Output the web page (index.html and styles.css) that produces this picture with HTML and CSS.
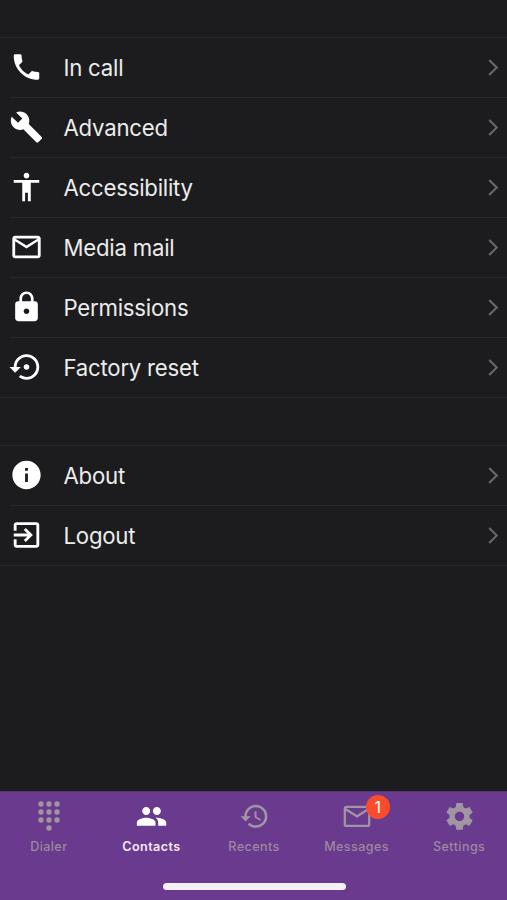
FILE: index.html
```html
<!DOCTYPE html>
<html lang="en">
<head>
<meta charset="utf-8">
<title>Settings</title>
<link rel="stylesheet" href="styles.css">
</head>
<body>
<main class="settings">
  <ul class="group">
    <li class="row"><svg class="icon" viewBox="0 0 24 24"><path d="M6.620 10.790c1.440 2.830 3.760 5.140 6.590 6.590l2.200-2.200c.27-.27.67-.36 1.020-.24 1.120.37 2.330.57 3.570.57.55 0 1 .45 1 1V20c0 .55-.45 1-1 1-9.390 0-17-7.610-17-17 0-.55.45-1 1-1h3.500c.55 0 1 .45 1 1 0 1.250.2 2.450.57 3.570.11.35.03.74-.25 1.020l-2.200 2.200z"/></svg><span class="label">In call</span><svg class="chevron" viewBox="0 0 12 20"><path d="M2 2l8 8-8 8"/></svg></li>
    <li class="row"><svg class="icon" viewBox="0 0 24 24"><path d="M22.700 19l-9.100-9.100c.9-2.300.4-5-1.500-6.900-2-2-5-2.400-7.400-1.300L9 6 6 9 1.600 4.700C.4 7.100.9 10.100 2.900 12.100c1.900 1.900 4.600 2.400 6.900 1.500l9.100 9.100c.4.4 1 .4 1.400 0l2.300-2.300c.5-.4.5-1.100.1-1.400z"/></svg><span class="label">Advanced</span><svg class="chevron" viewBox="0 0 12 20"><path d="M2 2l8 8-8 8"/></svg></li>
    <li class="row"><svg class="icon" viewBox="0 0 24 24"><path d="M12 2c1.100 0 2 .9 2 2s-.9 2-2 2-2-.9-2-2 .9-2 2-2zm9 7h-6v13h-2v-6h-2v6H9V9H3V7h18v2z"/></svg><span class="label">Accessibility</span><svg class="chevron" viewBox="0 0 12 20"><path d="M2 2l8 8-8 8"/></svg></li>
    <li class="row"><svg class="icon" viewBox="0 0 24 24"><path d="M20 4H4c-1.100 0-1.990.9-1.990 2L2 18c0 1.100.9 2 2 2h16c1.100 0 2-.9 2-2V6c0-1.100-.9-2-2-2zm0 14H4V8l8 5 8-5v10zm-8-7L4 6h16l-8 5z"/></svg><span class="label">Media mail</span><svg class="chevron" viewBox="0 0 12 20"><path d="M2 2l8 8-8 8"/></svg></li>
    <li class="row"><svg class="icon" viewBox="0 0 24 24"><path d="M18 8h-1V6c0-2.760-2.240-5-5-5S7 3.240 7 6v2H6c-1.100 0-2 .9-2 2v10c0 1.100.9 2 2 2h12c1.100 0 2-.9 2-2V10c0-1.100-.9-2-2-2zm-6 9c-1.100 0-2-.9-2-2s.9-2 2-2 2 .9 2 2-.9 2-2 2zm3.100-9H8.900V6c0-1.710 1.390-3.100 3.100-3.100s3.100 1.390 3.100 3.100v2z"/></svg><span class="label">Permissions</span><svg class="chevron" viewBox="0 0 12 20"><path d="M2 2l8 8-8 8"/></svg></li>
    <li class="row"><svg class="icon" viewBox="0 0 24 24"><path d="M14 12c0-1.100-.9-2-2-2s-2 .9-2 2 .9 2 2 2 2-.9 2-2zm-2-9c-4.970 0-9 4.030-9 9H0l4 4 4-4H5c0-3.870 3.130-7 7-7s7 3.130 7 7-3.130 7-7 7c-1.510 0-2.910-.49-4.060-1.300l-1.420 1.440C8.040 20.300 9.940 21 12 21c4.970 0 9-4.030 9-9s-4.030-9-9-9z"/></svg><span class="label">Factory reset</span><svg class="chevron" viewBox="0 0 12 20"><path d="M2 2l8 8-8 8"/></svg></li>
  </ul>
  <ul class="group">
    <li class="row"><svg class="icon" viewBox="0 0 24 24"><path d="M12 2C6.480 2 2 6.480 2 12s4.480 10 10 10 10-4.480 10-10S17.520 2 12 2zm1 15h-2v-6h2v6zm0-8h-2V7h2v2z"/></svg><span class="label">About</span><svg class="chevron" viewBox="0 0 12 20"><path d="M2 2l8 8-8 8"/></svg></li>
    <li class="row"><svg class="icon" viewBox="0 0 24 24"><path d="M10.090 15.590L11.500 17l5-5-5-5-1.410 1.410L12.670 11H3v2h9.670l-2.580 2.590zM19 3H5c-1.110 0-2 .9-2 2v4h2V5h14v14H5v-4H3v4c0 1.100.89 2 2 2h14c1.100 0 2-.9 2-2V5c0-1.100-.9-2-2-2z"/></svg><span class="label">Logout</span><svg class="chevron" viewBox="0 0 12 20"><path d="M2 2l8 8-8 8"/></svg></li>
  </ul>
</main>
<nav class="tabbar">
  <div class="tabs">
    <div class="tab"><svg class="tab-icon" viewBox="0 0 24 24"><circle cx="6" cy="3" r="2"/><circle cx="12" cy="3" r="2"/><circle cx="18" cy="3" r="2"/><circle cx="6" cy="9" r="2"/><circle cx="12" cy="9" r="2"/><circle cx="18" cy="9" r="2"/><circle cx="6" cy="15" r="2"/><circle cx="12" cy="15" r="2"/><circle cx="18" cy="15" r="2"/><circle cx="12" cy="21" r="2"/></svg><span>Dialer</span></div>
    <div class="tab active"><svg class="tab-icon" viewBox="-.4 -.3 24 24"><path d="M16 11c1.660 0 2.990-1.340 2.990-3S17.660 5 16 5c-1.660 0-3 1.340-3 3s1.340 3 3 3zm-8 0c1.660 0 2.990-1.340 2.990-3S9.660 5 8 5C6.340 5 5 6.340 5 8s1.340 3 3 3zm0 2c-2.330 0-7 1.170-7 3.500V19h14v-2.500c0-2.330-4.670-3.500-7-3.500zm8 0c-.29 0-.62.02-.97.05 1.160.84 1.970 1.970 1.970 3.450V19h6v-2.500c0-2.330-4.670-3.500-7-3.500z"/></svg><span>Contacts</span></div>
    <div class="tab"><svg class="tab-icon" viewBox="-.9 -.7 24.900 24.900"><path d="M13 3c-4.970 0-9 4.030-9 9H1l3.890 3.890.07.14L9 12H6c0-3.870 3.130-7 7-7s7 3.130 7 7-3.130 7-7 7c-1.930 0-3.680-.79-4.940-2.060l-1.420 1.420C8.270 19.990 10.510 21 13 21c4.970 0 9-4.030 9-9s-4.030-9-9-9zm-1 5v5l4.280 2.540.72-1.210-3.500-2.080V8H12z"/></svg><span>Recents</span></div>
    <div class="tab"><svg class="tab-icon" viewBox="0 -.3 24 24"><path d="M20 4H4c-1.100 0-1.990.9-1.990 2L2 18c0 1.100.9 2 2 2h16c1.100 0 2-.9 2-2V6c0-1.100-.9-2-2-2zm.3 14.300H3.700V7.800l8.300 5.200 8.300-5.200v10.500zM12 11L3.700 5.700h16.600L12 11z"/></svg><span>Messages</span><b class="badge">1</b></div>
    <div class="tab"><svg class="tab-icon" viewBox="-.4 -.3 24 24"><path d="M19.430 12.980c.04-.32.07-.64.07-.98s-.03-.66-.07-.98l2.110-1.650c.19-.15.24-.42.12-.64l-2-3.460c-.12-.22-.39-.3-.61-.22l-2.490 1c-.52-.4-1.080-.73-1.690-.98l-.38-2.650C14.460 2.180 14.250 2 14 2h-4c-.25 0-.46.18-.49.42l-.38 2.650c-.61.25-1.170.59-1.690.98l-2.490-1c-.23-.09-.49 0-.61.22l-2 3.460c-.13.22-.07.49.12.64l2.110 1.650c-.04.32-.07.65-.07.98s.03.66.07.98l-2.110 1.650c-.19.15-.24.42-.12.64l2 3.460c.12.22.39.3.61.22l2.490-1c.52.4 1.080.73 1.690.98l.38 2.650c.03.24.24.42.49.42h4c.25 0 .46-.18.49-.42l.38-2.650c.61-.25 1.170-.59 1.690-.98l2.490 1c.23.09.49 0 .61-.22l2-3.460c.12-.22.07-.49-.12-.64l-2.110-1.650zM12 15.500c-1.930 0-3.500-1.570-3.500-3.500s1.570-3.500 3.500-3.500 3.500 1.570 3.500 3.500-1.570 3.500-3.500 3.500z"/></svg><span>Settings</span></div>
  </div>
  <div class="home-indicator"></div>
</nav>
</body>
</html>
```
FILE: styles.css
```css
* { box-sizing: border-box; }

body {
  margin: 0;
  height: 900px;
  display: flex;
  flex-direction: column;
  overflow: hidden;
  background: #1c1c1e;
  color: #ececec;
  font-family: Inter, "Liberation Sans", sans-serif;
}

.settings {
  flex: 1;
  display: flex;
  flex-direction: column;
  gap: 47px;
  padding-top: 37px;
}

.group {
  margin: 0;
  padding: 0;
  list-style: none;
  border-top: 1px solid #28282a;
}

.row {
  display: flex;
  align-items: center;
  height: 60px;
  padding: 0 8px 2px 9px;
  background: linear-gradient(#28282a, #28282a) 10px 100% / 100% 1px no-repeat;
}

.row:last-child { background-position: 0 100%; }

.icon {
  width: 35px;
  height: 34px;
  fill: #fff;
}

.label {
  flex: 1;
  margin-left: 19.500px;
  padding-top: 2px;
  font-size: 22.200px;
  line-height: 30px;
  letter-spacing: -0.230px;
}

.chevron {
  width: 12px;
  height: 19px;
  fill: none;
  stroke: #68686a;
  stroke-width: 2.200;
}

.tabbar {
  height: 109px;
  background: #693a8d;
  border-top: 1px solid #563376;
}

.tabs {
  display: grid;
  grid-template-columns: repeat(5, 102.600px);
  margin-left: -2.500px;
  height: 70px;
  padding-top: 8px;
}

.tab {
  position: relative;
  display: flex;
  flex-direction: column;
  align-items: center;
  color: #9b899f;
  font-size: 12.600px;
  font-weight: 500;
  line-height: 16px;
  letter-spacing: 0.400px;
}

.tab-icon {
  width: 32px;
  height: 32px;
  margin-bottom: 7px;
  fill: #a096a2;
}

.active { color: #f5e9fa; font-weight: 600; }
.active .tab-icon { fill: #fff; }

.badge {
  position: absolute;
  top: -5px;
  left: 60.500px;
  width: 24px;
  height: 24px;
  border-radius: 50%;
  background: #fa4c2d;
  color: #fff;
  font-size: 16px;
  font-weight: 400;
  line-height: 24px;
  letter-spacing: 0;
  text-align: center;
}

.home-indicator {
  width: 183px;
  height: 7px;
  margin: 21px auto 0 163px;
  border-radius: 4px;
  background: #f4f0f5;
}
```
